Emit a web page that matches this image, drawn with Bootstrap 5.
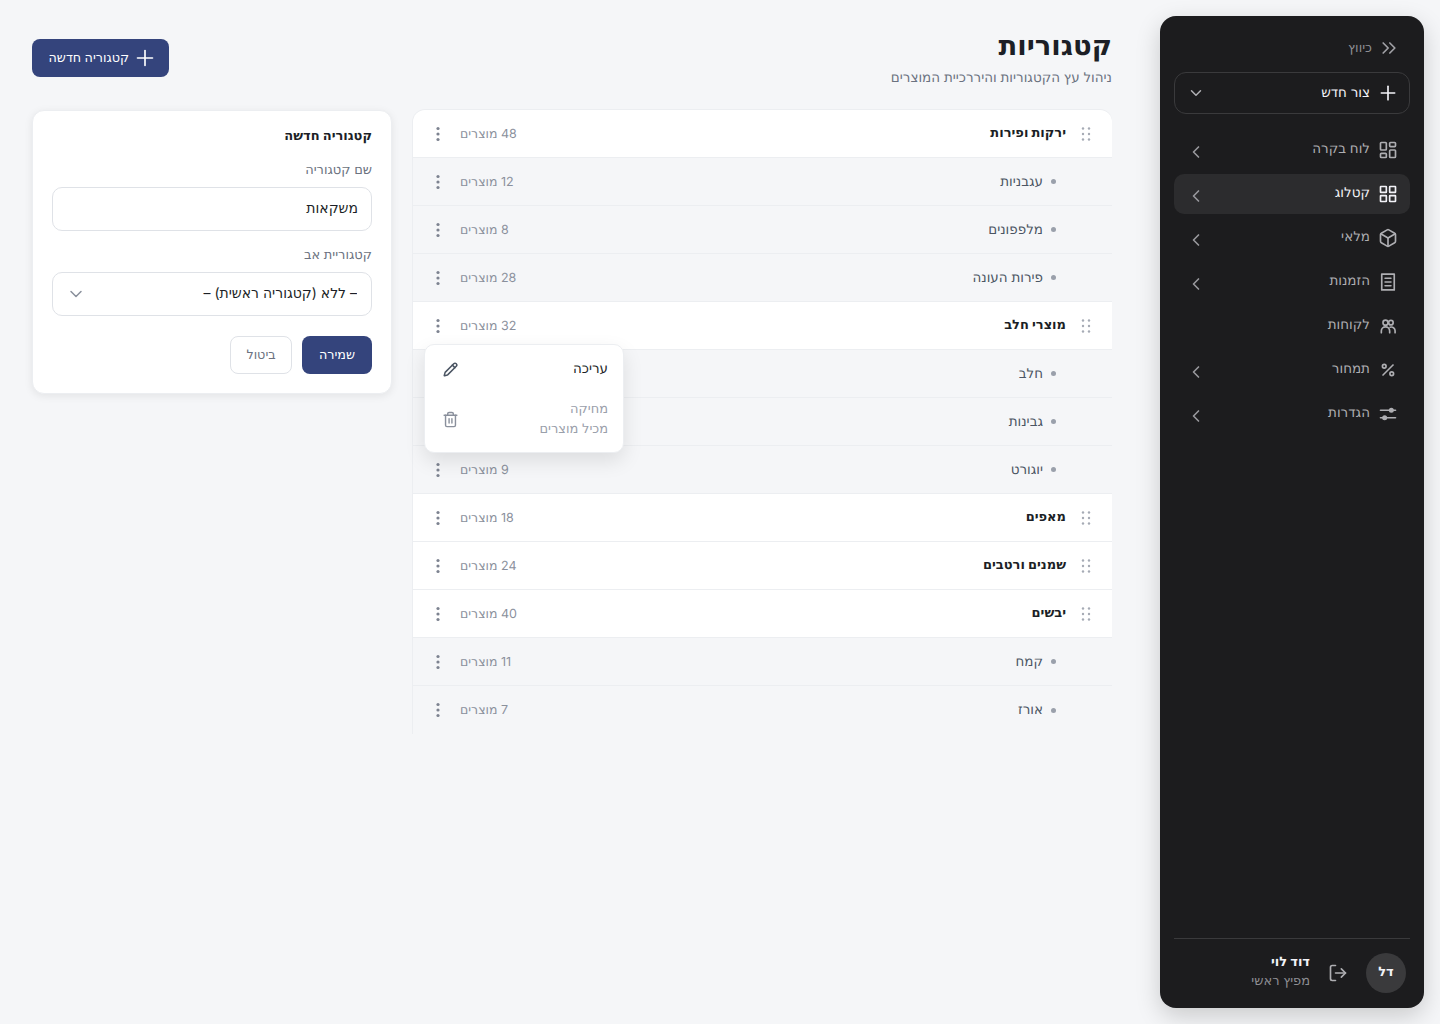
<!DOCTYPE html>
<html lang="he" dir="rtl">

<head>
    <meta charset="UTF-8">
    <meta name="viewport" content="width=device-width, initial-scale=1.0">
    <title>קטגוריות</title>
    <link href="https://cdn.jsdelivr.net/npm/bootstrap@5.3.0/dist/css/bootstrap.min.css" rel="stylesheet">
    <style>
        body {
            background: #f5f6f8;
            color: #1c1f26;
            font-family: Inter, "DejaVu Sans", sans-serif;
            font-size: 13.5px;
            height: 1024px;
            overflow: hidden;
            text-rendering: geometricPrecision;
        }

        svg { display: block; flex: none; fill: none; stroke: currentColor; stroke-width: 2; stroke-linecap: round; stroke-linejoin: round; }

        /* sidebar */
        .side-panel {
            width: 264px;
            height: 992px;
            margin: 16px 16px 16px 0;
            padding: 0 14px;
            background: #1c1c1e;
            border-radius: 16px;
            box-shadow: 0 8px 24px rgba(0, 0, 0, .18);
            flex: none;
        }
        .collapse-row { height: 56px; padding: 8px 11px 0 0; color: #8e8e93; font-size: 13px; gap: 7px; }
        .collapse-row span { margin-top: 2px; }
        .collapse-row svg { color: #a1a1a6; }
        .new-tool {
            height: 42px;
            padding: 0 11px 0 12px;
            border: 1px solid #3a3a3c;
            border-radius: 12px;
            color: #f2f2f7;
            font-size: 13.5px;
            gap: 8px;
        }
        .new-tool svg:last-child { color: #b0b0b5; }
        .side-nav { margin-top: 16px; gap: 4px; }
        .side-link {
            height: 40px;
            padding: 0 12px;
            border-radius: 10px;
            color: #aeaeb2;
            font-size: 13.5px;
            gap: 8px;
        }
        .side-link.active-link { background: #2c2c2e; color: #f2f2f7; }
        .side-link span { margin-top: -1px; }
        .side-link .go-arrow { color: #98989d; margin-top: 3px; }
        .side-foot { border-top: 1px solid #3a3a3c; height: 70px; padding: 0 4px 2px; }
        .user-dot { width: 40px; height: 40px; border-radius: 50%; background: #3a3a3c; color: #f2f2f7; font-size: 13px; font-weight: 700; }
        .user-name { font-size: 13px; font-weight: 700; color: #f2f2f7; line-height: 19px; }
        .user-role { font-size: 13px; color: #8e8e93; line-height: 19px; }
        .user-text { margin-top: -1px; }
        .logout-ico { color: #aeaeb2; margin: 0 18px 0 18px; }

        /* main */
        .main-area { width: 1080px; margin-right: 48px; }
        .page-title { font-size: 27.5px; font-weight: 700; line-height: 34px; margin: 0; color: #1c1f26; }
        .page-sub { font-size: 13.5px; color: #6b7280; line-height: 20px; margin-top: 6px; }
        .head-row { height: 110px; padding-top: 28px; }
        .btn-navy { background: #34447c; border: 0; color: #fff; border-radius: 8px; font-size: 12.75px; font-weight: 500; }
        .btn-navy:hover { background: #34447c; color: #fff; }
        .add-btn { height: 38px; width: 137px; margin-top: 11px; gap: 6px; padding: 0 14px; }

        .cat-list { width: 700px; position: relative; border-left: 1px solid #eceef1; border-radius: 12px 12px 0 0; }
        .cat-row {
            height: 48px;
            border-bottom: 1px solid #eceef1;
            padding: 0 20px 0 17px;
        }
        .cat-row:nth-last-child(2) { border-bottom: 0; }
        .cat-row.top-row { background: #fff; font-size: 13px; font-weight: 700; color: #1c1f26; }
        .cat-row.sub-row { color: #4b5563; }
        .cat-name { margin-top: 1px; }
        .cat-row:first-child { border-radius: 12px 12px 0 0; box-shadow: 0 -1px 0 #eceef1; }
        .grip { color: #a6abb5; margin-left: 14px; }
        .sub-dot { width: 5px; height: 5px; border-radius: 50%; background: #9aa0ab; margin: 0 36px 0 8px; }
        .count-txt { color: #8a909c; font-size: 12.5px; font-weight: 400; margin: 3px 0 0 14px; }
        .kebab { color: #7d8390; }

        .row-menu {
            position: absolute;
            top: 234px;
            left: 11px;
            width: 200px;
            height: 109px;
            background: #fff;
            border: 1px solid #eceef1;
            border-radius: 10px;
            box-shadow: 0 8px 20px rgba(0, 0, 0, .1);
            padding: 0 15px;
        }
        .menu-edit { height: 48px; color: #1c1f26; font-size: 13.5px; }
        .menu-edit svg { color: #4b5563; stroke-width: 2.4; margin-left: 3px; }
        .menu-del { color: #9aa0ab; line-height: 20px; font-size: 13px; padding-top: 6px; }
        .menu-del svg { color: #8a909c; margin-left: 2px; }

        .form-panel {
            width: 360px;
            height: 284px;
            margin-right: 20px;
            border: 1px solid #eceef1;
            border-radius: 12px;
            box-shadow: 0 2px 8px rgba(0, 0, 0, .08);
            padding: 15px 19px;
        }
        .form-head { font-size: 13px; font-weight: 700; line-height: 20px; margin-bottom: 15px; }
        .field-label { font-size: 13px; color: #6b7280; line-height: 18px; margin-bottom: 8px; display: block; }
        .form-panel .form-control,
        .form-panel .form-select {
            height: 44px;
            border-radius: 10px;
            border-color: #dfe2e7;
            font-size: 14px;
            color: #1c1f26;
            padding: 0 14px 3px;
            background-color: #fff;
        }
        .form-panel .form-control { padding-right: 13px; }
        .form-panel .form-select {
            background-position: left 15px center;
            background-size: 16px 16px;
            background-image: url("data:image/svg+xml,%3csvg xmlns='http://www.w3.org/2000/svg' viewBox='0 0 16 16'%3e%3cpath fill='none' stroke='%238a909c' stroke-linecap='round' stroke-linejoin='round' stroke-width='1.5' d='m3 5.5 5 5 5-5'/%3e%3c/svg%3e");
        }
        .field-gap { margin-bottom: 15px; }
        .form-btns { margin-top: 20px; gap: 10px; }
        .save-btn { width: 70px; height: 38px; }
        .cancel-btn { width: 62px; height: 38px; background: #fff; border: 1px solid #dfe2e7; border-radius: 8px; color: #6b7280; font-size: 12.75px; }
    </style>
</head>

<body class="d-flex">
    <!-- סרגל צד -->
    <aside class="side-panel d-flex flex-column">
        <div class="collapse-row d-flex align-items-center">
            <svg width="20" height="20" viewBox="0 0 24 24" stroke-width="1.75"><path d="m5 18 6-6-6-6"/><path d="m13 18 6-6-6-6"/></svg>
            <span>כיווץ</span>
        </div>
        <div class="new-tool d-flex align-items-center">
            <svg width="20" height="20" viewBox="0 0 24 24"><path d="M4 12h16"/><path d="M12 4v16"/></svg>
            <span class="flex-grow-1">צור חדש</span>
            <svg width="18" height="18" viewBox="0 0 24 24"><path d="m6 9 6 6 6-6"/></svg>
        </div>
        <nav class="side-nav d-flex flex-column" id="side-nav"></nav>
        <div class="side-foot mt-auto d-flex align-items-center">
            <div class="user-dot d-flex align-items-center justify-content-center">דל</div>
            <svg class="logout-ico" width="20" height="20" viewBox="0 0 24 24"><path d="M9 21H5a2 2 0 0 1-2-2V5a2 2 0 0 1 2-2h4"/><path d="m16 17 5-5-5-5"/><path d="M21 12H9"/></svg>
            <div class="user-text">
                <div class="user-name">דוד לוי</div>
                <div class="user-role">מפיץ ראשי</div>
            </div>
        </div>
    </aside>

    <main class="main-area">
        <div class="head-row d-flex justify-content-between align-items-start">
            <div>
                <h1 class="page-title">קטגוריות</h1>
                <div class="page-sub">ניהול עץ הקטגוריות והיררכיית המוצרים</div>
            </div>
            <button class="btn btn-navy add-btn d-flex align-items-center">
                <svg width="20" height="20" viewBox="0 0 24 24"><path d="M3 12h18"/><path d="M12 3v18"/></svg>
                קטגוריה חדשה
            </button>
        </div>

        <div class="d-flex">
            <div class="cat-list" id="cat-list">
                <div class="row-menu">
                    <div class="menu-edit d-flex align-items-center justify-content-between">
                        <span>עריכה</span>
                        <svg width="15" height="15" viewBox="0 0 24 24"><path d="M21.2 6.8a2.8 2.8 0 0 0-4-4L3.8 16.2a2 2 0 0 0-.5.8l-1.3 4.4a.5.5 0 0 0 .6.6l4.4-1.3a2 2 0 0 0 .8-.5z"/><path d="m15 5 4 4"/></svg>
                    </div>
                    <div class="menu-del d-flex align-items-center justify-content-between">
                        <span>מחיקה<br>מכיל מוצרים</span>
                        <svg width="17" height="17" viewBox="0 0 24 24"><path d="M3 6h18"/><path d="M19 6v14a2 2 0 0 1-2 2H7a2 2 0 0 1-2-2V6"/><path d="M8 6V4a2 2 0 0 1 2-2h4a2 2 0 0 1 2 2v2"/><path d="M10 11v6"/><path d="M14 11v6"/></svg>
                    </div>
                </div>
            </div>

            <div class="card form-panel">
                <div class="form-head">קטגוריה חדשה</div>
                <div class="field-gap">
                    <label class="field-label" for="cat-name">שם קטגוריה</label>
                    <input id="cat-name" type="text" class="form-control" value="משקאות">
                </div>
                <div>
                    <label class="field-label" for="cat-parent">קטגוריית אב</label>
                    <select id="cat-parent" class="form-select">
                        <option>– ללא (קטגוריה ראשית) –</option>
                    </select>
                </div>
                <div class="form-btns d-flex">
                    <button class="btn btn-navy save-btn p-0">שמירה</button>
                    <button class="btn cancel-btn p-0">ביטול</button>
                </div>
            </div>
        </div>
    </main>

    <script>
        // תפריט צד
        const icons = {
            dash: '<rect x="3" y="3" width="7" height="9" rx="1"/><rect x="14" y="3" width="7" height="5" rx="1"/><rect x="14" y="12" width="7" height="9" rx="1"/><rect x="3" y="16" width="7" height="5" rx="1"/>',
            grid: '<rect x="3" y="3" width="7" height="7" rx=".5"/><rect x="14" y="3" width="7" height="7" rx=".5"/><rect x="14" y="14" width="7" height="7" rx=".5"/><rect x="3" y="14" width="7" height="7" rx=".5"/>',
            box: '<path d="M21 8a2 2 0 0 0-1-1.73l-7-4a2 2 0 0 0-2 0l-7 4A2 2 0 0 0 3 8v8a2 2 0 0 0 1 1.73l7 4a2 2 0 0 0 2 0l7-4A2 2 0 0 0 21 16Z"/><path d="m3.3 7 8.7 5 8.7-5"/><path d="M12 22V12"/>',
            doc: '<rect x="4.5" y="2.5" width="15" height="19"/><path d="M8.5 7.5h7"/><path d="M8.5 12h7"/><path d="M8.5 16.5h7"/>',
            users: '<circle cx="9" cy="8" r="3"/><circle cx="15.5" cy="8" r="2.7"/><path d="M4 20v-2a5 5 0 0 1 10 0v2"/><path d="M14.5 13.5a4.5 4.5 0 0 1 6 4.3V20"/>',
            percent: '<path d="M18 6 6 18"/><circle cx="7.5" cy="7.5" r="2.2"/><circle cx="16.5" cy="16.5" r="2.2"/>',
            sliders: '<path d="M21 7.5H3"/><path d="M21 16.5H3"/><circle cx="16" cy="7.5" r="2" fill="currentColor"/><circle cx="8" cy="16.5" r="2" fill="currentColor"/>'
        };
        const navItems = [
            ['dash', 'לוח בקרה', true], ['grid', 'קטלוג', true], ['box', 'מלאי', true], ['doc', 'הזמנות', true],
            ['users', 'לקוחות', false], ['percent', 'תמחור', true], ['sliders', 'הגדרות', true]
        ];
        document.getElementById('side-nav').innerHTML = navItems.map((item, i) => `
            <div class="side-link d-flex align-items-center ${i === 1 ? 'active-link' : ''}">
                <svg width="20" height="20" viewBox="0 0 24 24">${icons[item[0]]}</svg>
                <span class="flex-grow-1">${item[1]}</span>
                ${item[2] ? '<svg class="go-arrow" width="20" height="20" viewBox="0 0 24 24"><path d="m15 18-6-6 6-6"/></svg>' : ''}
            </div>`).join('');

        // רשימת קטגוריות
        const cats = [
            [0, 'ירקות ופירות', '48 מוצרים'], [1, 'עגבניות', '12 מוצרים'], [1, 'מלפפונים', '8 מוצרים'], [1, 'פירות העונה', '28 מוצרים'],
            [0, 'מוצרי חלב', '32 מוצרים'], [1, 'חלב', '14 מוצרים'], [1, 'גבינות', '9 מוצרים'], [1, 'יוגורט', '9 מוצרים'],
            [0, 'מאפים', '18 מוצרים'], [0, 'שמנים ורטבים', '24 מוצרים'], [0, 'יבשים', '40 מוצרים'], [1, 'קמח', '11 מוצרים'], [1, 'אורז', '7 מוצרים']
        ];
        const grip = '<svg class="grip" width="12" height="14" viewBox="0 0 12 14"><g fill="currentColor" stroke="none"><circle cx="3" cy="1.5" r="1.2"/><circle cx="9" cy="1.5" r="1.2"/><circle cx="3" cy="7" r="1.2"/><circle cx="9" cy="7" r="1.2"/><circle cx="3" cy="12.5" r="1.2"/><circle cx="9" cy="12.5" r="1.2"/></g></svg>';
        const kebab = '<svg class="kebab" width="16" height="16" viewBox="0 0 16 16"><g fill="currentColor" stroke="none"><circle cx="8" cy="2.5" r="1.6"/><circle cx="8" cy="8" r="1.6"/><circle cx="8" cy="13.5" r="1.6"/></g></svg>';
        const listEl = document.getElementById('cat-list');
        const menuEl = listEl.querySelector('.row-menu');
        cats.forEach(c => {
            const row = document.createElement('div');
            row.className = 'cat-row d-flex align-items-center ' + (c[0] ? 'sub-row' : 'top-row');
            row.innerHTML = `${c[0] ? '<span class="sub-dot"></span>' : grip}
                <span class="flex-grow-1 cat-name">${c[1]}</span>
                <span class="count-txt">${c[2]}</span>${kebab}`;
            listEl.insertBefore(row, menuEl);
        });
    </script>
    <script src="https://cdn.jsdelivr.net/npm/bootstrap@5.3.0/dist/js/bootstrap.bundle.min.js"></script>
</body>

</html>
